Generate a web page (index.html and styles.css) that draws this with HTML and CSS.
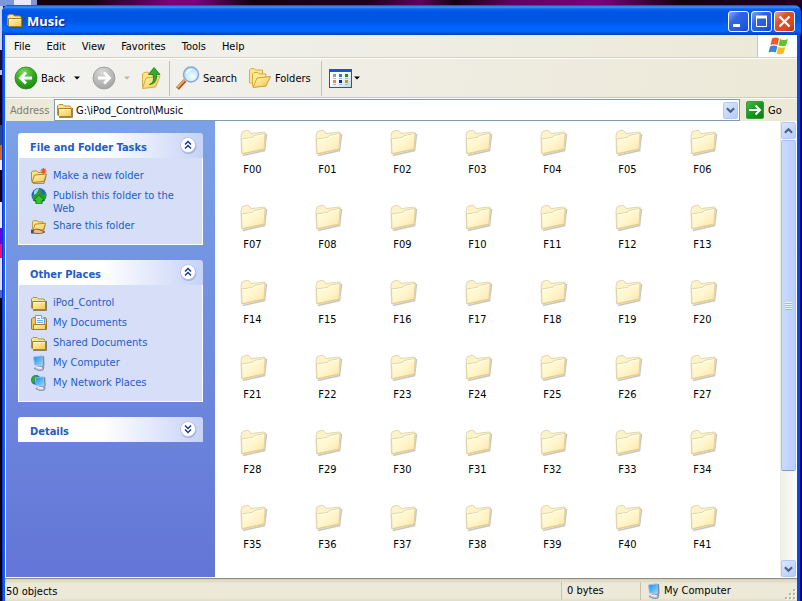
FILE: index.html
```html
<!DOCTYPE html>
<html lang="en">
<head>
<meta charset="utf-8">
<title>Music</title>
<link rel="stylesheet" href="styles.css">
</head>
<body>
<svg class="defs" aria-hidden="true">
  <defs>
    <linearGradient id="gFolder" x1="0" y1="0" x2="1" y2="1"><stop offset="0" stop-color="#fff6b8"/><stop offset="1" stop-color="#f4c64c"/></linearGradient>
    <linearGradient id="gPale" x1="0" y1="0" x2="1" y2="1"><stop offset="0" stop-color="#fffce0"/><stop offset=".5" stop-color="#fff6cc"/><stop offset="1" stop-color="#fbe3a8"/></linearGradient>
    <radialGradient id="gGreen" cx=".4" cy=".25" r=".8"><stop offset="0" stop-color="#7fd860"/><stop offset=".6" stop-color="#2fa51f"/><stop offset="1" stop-color="#1c8410"/></radialGradient>
    <radialGradient id="gGray" cx=".4" cy=".25" r=".8"><stop offset="0" stop-color="#d8d8d8"/><stop offset="1" stop-color="#a2a2a2"/></radialGradient>
    <linearGradient id="gScreen" x1="0" y1="0" x2="1" y2="1"><stop offset="0" stop-color="#1f86ee"/><stop offset="1" stop-color="#86e2ff"/></linearGradient>
    <linearGradient id="gView" x1="0" y1="0" x2="1" y2="1"><stop offset="0.4" stop-color="#fff"/><stop offset="1" stop-color="#b4d4fa"/></linearGradient>
    <linearGradient id="gGo" x1="0" y1="0" x2="1" y2="1"><stop offset="0" stop-color="#4cb84c"/><stop offset=".5" stop-color="#149a1c"/><stop offset="1" stop-color="#0a7a12"/></linearGradient>
    <radialGradient id="gLens" cx=".6" cy=".65" r=".7"><stop offset="0" stop-color="#f4fdff"/><stop offset="1" stop-color="#a5dcfa"/></radialGradient>
    <symbol id="big-folder" viewBox="0 0 32 32">
      <path d="M6 29.500l21.500-5L29.500 8" fill="none" stroke="#a8a8a8" stroke-width="1.600" opacity=".65"/>
      <path d="M4 10L5 6 7 5l4-.8L13 6l1 1.500L27.500 6l1 1-1 16-22 5L4.500 27z" fill="#fdf3c8" stroke="#ddd3b0" stroke-width=".9"/>
      <path d="M4.500 13L15 11.500 17.500 9.500 28 7.500 27 23.500 5 28z" fill="url(#gPale)" stroke="#e0cf9e" stroke-width=".9"/>
      <path d="M5.300 14L15.300 12.500 17.800 10.500 27 8.700" fill="none" stroke="#fffef2" stroke-width=".9"/>
      <path d="M5.500 27.500L26.700 23" stroke="#e8c87c" stroke-width=".8"/>
    </symbol>
    <symbol id="folder" viewBox="0 0 16 16">
      <path d="M2 15.400h13.500V6" fill="none" stroke="#5d4c28" opacity=".7"/>
      <path d="M.5 13V4L2 2.500h4L7.500 4H13l1 1.500V13z" fill="#fbe68c" stroke="#b8902c"/>
      <path d="M1.500 6.500h13v8h-12l-1-1z" fill="url(#gFolder)" stroke="#ab801c"/>
      <path d="M2.500 7.500h11" stroke="#fffbd8"/>
    </symbol>
    <symbol id="open-folder" viewBox="0 0 16 16">
      <path d="M2 15.400h11l2-7" fill="none" stroke="#5d4c28" opacity=".6"/>
      <path d="M.5 13V4L2 3h4l1 1.500h5.500V13z" fill="#fbe68c" stroke="#b8902c"/>
      <path d="M3.500 7L15.500 6 13 13.500 1 14.500z" fill="url(#gFolder)" stroke="#ab801c"/>
    </symbol>
    <symbol id="computer" viewBox="0 0 16 16">
      <path d="M3 13.500l4-2.500 6 1-1 3-4 .8z" fill="#b9bfd0" stroke="#6d7690" stroke-width=".7"/>
      <path d="M10.500 1.500L13 1l.5 9.500-2.500 2z" fill="#76829f"/>
      <path d="M2.500 2L11 .8 12 10.500 3.500 10z" fill="url(#gScreen)" stroke="#a4bce0" stroke-width=".9"/>
      <path d="M5 11.500l6 .5-1 2-5.500-1z" fill="#edf0f7"/>
    </symbol>
    <symbol id="up2" viewBox="0 0 18 18">
      <circle cx="9.500" cy="10" r="8" fill="#7c8cc0" opacity=".5"/><circle cx="9" cy="9" r="7.500" fill="#fff" stroke="#b4bfe0" stroke-width=".8"/>
      <path d="M6 8.500L9 5.500l3 3M6 12.500L9 9.500l3 3" fill="none" stroke="#123b9b" stroke-width="1.500"/>
    </symbol>
    <symbol id="down2" viewBox="0 0 18 18">
      <circle cx="9.500" cy="10" r="8" fill="#7c8cc0" opacity=".5"/><circle cx="9" cy="9" r="7.500" fill="#fff" stroke="#b4bfe0" stroke-width=".8"/>
      <path d="M6 5.500l3 3 3-3M6 9.500l3 3 3-3" fill="none" stroke="#123b9b" stroke-width="1.500"/>
    </symbol>
    <symbol id="chev-down" viewBox="0 0 10 8"><path d="M1 2l4 4 4-4" fill="none" stroke="#4d6185" stroke-width="2.400"/></symbol>
    <symbol id="chev-up" viewBox="0 0 10 8"><path d="M1 6l4-4 4 4" fill="none" stroke="#4d6185" stroke-width="2.400"/></symbol>
    <symbol id="drop" viewBox="0 0 6 4"><path d="M0 .5h6L3 3.500z" fill="currentColor"/></symbol>
  </defs>
</svg>
<div class="window">
  <header class="titlebar">
    <svg class="i16"><use href="#folder"/></svg>
    <h1>Music</h1>
    <button class="cap" aria-label="Minimize"><svg viewBox="0 0 21 21"><path d="M5 14.500h7" stroke="#fff" stroke-width="3"/></svg></button>
    <button class="cap" aria-label="Maximize"><svg viewBox="0 0 21 21"><path d="M5.500 6v9.500h10V6" fill="none" stroke="#fff"/><path d="M5 6h11" stroke="#fff" stroke-width="3"/></svg></button>
    <button class="cap close" aria-label="Close"><svg viewBox="0 0 21 21"><path d="M5.500 5.500l10 10M15.500 5.500l-10 10" stroke="#fff" stroke-width="2.200"/></svg></button>
  </header>

  <div class="menurow">
    <nav class="menus">
      <button>File</button><button>Edit</button><button>View</button><button>Favorites</button><button>Tools</button><button>Help</button>
    </nav>
    <div class="flag">
      <svg width="22" height="20" viewBox="0 0 22 20">
        <path d="M5 2.500q3.500-2 7 0l-1.500 6.500q-3.500-1.500-7 0z" fill="#ee5a24"/>
        <path d="M13 3q3.500 1.800 8 0l-2 6.500q-3.500 1.500-7.500 0z" fill="#6bbd2e"/>
        <path d="M3 10.500q3.500-1.800 7.500 0L8.800 16.500q-3.500-1.700-7.300 0z" fill="#3f83d8"/>
        <path d="M11.300 11q3.500 1.500 7 0L16.500 17.500q-3.500 1.500-7 0z" fill="#fbbc14"/>
      </svg>
    </div>
  </div>

  <div class="toolbar">
    <button class="tool back"><svg width="24" height="24" viewBox="0 0 24 24"><circle cx="12" cy="12" r="11" fill="url(#gGreen)" stroke="#278c1a" stroke-width=".8"/><path d="M18 12H7M12 6.500L6.500 12l5.500 5.500" fill="none" stroke="#fff" stroke-width="2.800"/></svg><span>Back</span><svg class="arr"><use href="#drop"/></svg></button>
    <button class="tool fwd" aria-label="Forward" disabled><svg width="24" height="24" viewBox="0 0 24 24"><circle cx="12" cy="12" r="11" fill="url(#gGray)" stroke="#999" stroke-width=".8"/><path d="M6 12h11M12 6.500l5.500 5.500-5.500 5.500" fill="none" stroke="#fff" stroke-width="2.800"/></svg><svg class="arr"><use href="#drop"/></svg></button>
    <button class="tool up" aria-label="Up"><svg width="20" height="24" viewBox="0 0 20 24"><path d="M1.500 21V8L3 6.500l4-.5 1.500 2 6-.5v12z" fill="#fbe68c" stroke="#d6ac3c"/><path d="M5 12l14-2-4.500 11L1.500 22.500z" fill="url(#gFolder)" stroke="#d6ac3c"/><path d="M8.500 18.500q5.500-1.500 3.500-10H7.500L13 1.500 19 8.500h-3.500q1 9-7 10z" fill="#35ad2c" stroke="#16790f" stroke-width=".8"/></svg></button>
    <span class="sep"></span>
    <button class="tool search"><svg width="24" height="24" viewBox="0 0 24 24"><path d="M1.500 22.500L9 14.500" stroke="#a45423" stroke-width="4"/><path d="M1.500 21.500L8.500 14" stroke="#f0a15e" stroke-width="2"/><circle cx="15" cy="8.500" r="7.500" fill="url(#gLens)" stroke="#8ba6dc" stroke-width="1.500"/><path d="M10.500 8q1-4 5-4.500" stroke="#fff" stroke-width="1.500" fill="none"/></svg><span>Search</span></button>
    <button class="tool folders"><svg width="23" height="22" viewBox="0 0 23 22"><path d="M1.500 16V3L3 1.500h3L7.500 3h7v13z" fill="#fbe68c" stroke="#d9ad3c"/><path d="M4.500 19V7L6 5.500h4L11.500 7h6.500v12z" fill="#fdeb98" stroke="#d9ad3c"/><path d="M9 11l13.500-1.500L18 19 5 20.500z" fill="url(#gFolder)" stroke="#cf9f34"/></svg><span>Folders</span></button>
    <span class="sep"></span>
    <button class="tool views" aria-label="Views"><svg width="23" height="19" viewBox="0 0 23 19"><rect x=".5" y=".5" width="22" height="18" fill="url(#gView)" stroke="#0a5ccb"/><path d="M0 1.500h23" stroke="#0a5ccb" stroke-width="3"/><path d="M4 6.500h3" stroke="#9c96cf" stroke-width="3"/><path d="M10 6.500h3" stroke="#1484e8" stroke-width="3"/><path d="M16 6.500h3" stroke="#0d9a18" stroke-width="3"/><path d="M4 12.500h3" stroke="#ff7d50" stroke-width="3"/><path d="M10 12.500h3" stroke="#0a309c" stroke-width="3"/><path d="M16 12.500h3" stroke="#cf9a00" stroke-width="3"/><path d="M4 9.500h3m3 0h3m3 0h3M4 15.500h3m3 0h3m3 0h3" stroke="#b5b5b5"/></svg><svg class="arr"><use href="#drop"/></svg></button>
  </div>

  <form class="address">
    <label for="addr">Address</label>
    <div class="combo">
      <svg class="i16"><use href="#folder"/></svg>
      <input id="addr" type="text" value="G:\iPod_Control\Music">
      <button type="button" class="sbtn" aria-label="Show addresses"><svg class="chev"><use href="#chev-down"/></svg></button>
    </div>
    <button type="button" class="go"><svg width="18" height="18" viewBox="0 0 18 18"><rect x=".5" y=".5" width="17" height="17" rx="1.500" fill="url(#gGo)" stroke="#3c9a40"/><path d="M3 9h11M9.500 4.500L14 9l-4.500 4.500" fill="none" stroke="#fff" stroke-width="2"/></svg><span>Go</span></button>
  </form>

  <main class="content">
    <aside class="side">
      <section class="panel">
        <header><h2>File and Folder Tasks</h2><button aria-label="Collapse"><svg><use href="#up2"/></svg></button></header>
        <ul>
          <li><svg class="i16" viewBox="0 0 16 16"><use href="#open-folder" width="16" height="16"/><path d="M12.500 0v6M9.500 3h6M10.500 1l4 4M14.500 1l-4 4" stroke="#f0561c" stroke-width="1.200"/></svg><a href="#">Make a new folder</a></li>
          <li><svg class="i16" viewBox="0 0 16 16"><circle cx="8" cy="7.500" r="7.500" fill="#2068c8"/><path d="M3 3q3-3 5-2.500L7 5 3 7z" fill="#9fd8f8"/><path d="M1 8l4-2 3-5 3 2-1 4 5-2q1 5-2 7H3z" fill="#2f9a34"/><path d="M8 7l5.500 5.500H11V16H5v-3.500H2.500z" fill="#33c528" stroke="#0f6f12" stroke-width=".8"/></svg><a href="#">Publish this folder to the Web</a></li>
          <li><svg class="i16" viewBox="0 0 16 16"><use href="#open-folder" width="16" height="14"/><path d="M2 12.500q3-2.500 6-1l6 2.500q-5 2.500-8 1.500L2 15z" fill="#f0ba88" stroke="#714424" stroke-width=".8"/><path d="M0 11.500v4h2.500v-3.500z" fill="#35517e"/></svg><a href="#">Share this folder</a></li>
        </ul>
      </section>
      <section class="panel">
        <header><h2>Other Places</h2><button aria-label="Collapse"><svg><use href="#up2"/></svg></button></header>
        <ul>
          <li><svg class="i16"><use href="#folder"/></svg><a href="#">iPod_Control</a></li>
          <li><svg class="i16" viewBox="0 0 16 16"><path d="M.5 14V4L2 2.500h12.500L15.500 4v10.500H1z" fill="#f0c850" stroke="#a87d18"/><path d="M4.500.5h6l3 3v8h-9z" fill="#f4faff" stroke="#6d9bd0"/><path d="M10.500.5v3h3" fill="#cfe6fb" stroke="#6d9bd0" stroke-width=".8"/><path d="M6 3.500h3M6 5.500h6M6 7.500h6" stroke="#6fb2ea"/><path d="M2.500 9.500h12v5h-12z" fill="url(#gFolder)" stroke="#a87d18"/></svg><a href="#">My Documents</a></li>
          <li><svg class="i16"><use href="#folder"/></svg><a href="#">Shared Documents</a></li>
          <li><svg class="i16"><use href="#computer"/></svg><a href="#">My Computer</a></li>
          <li><svg class="i16" viewBox="0 0 16 16"><circle cx="5" cy="5" r="5" fill="#2474d4"/><path d="M1 2q3-3 5-1L5 5 2 8q-2-2-1-6zM4 6l4 1-2 3z" fill="#2fa82e"/><use href="#computer" x="2" y="1" width="15" height="15"/></svg><a href="#">My Network Places</a></li>
        </ul>
      </section>
      <section class="panel">
        <header><h2>Details</h2><button aria-label="Expand"><svg><use href="#down2"/></svg></button></header>
      </section>
    </aside>
    <div class="files" id="files"></div>
    <div class="scroll">
      <button class="sbtn" aria-label="Scroll up"><svg class="chev"><use href="#chev-up"/></svg></button>
      <div class="track"><div class="thumb"><i></i></div></div>
      <button class="sbtn" aria-label="Scroll down"><svg class="chev"><use href="#chev-down"/></svg></button>
    </div>
  </main>

  <footer class="status">
    <span class="count">50 objects</span>
    <span class="size">0 bytes</span>
    <span class="zone"><svg class="i16"><use href="#computer"/></svg>My Computer</span>
    <svg class="grip" width="12" height="12" viewBox="0 0 12 12"><path d="M9 1.500h2M5 5.500h2m2 0h2M1 9.500h2m2 0h2m2 0h2" stroke="#fff" stroke-width="2"/><path d="M8 1h2M4 5h2m2 0h2M0 9h2m2 0h2m2 0h2" stroke="#b8b4a2" stroke-width="2"/></svg>
  </footer>
</div>
<script src="script.js"></script>
</body>
</html>
```
FILE: styles.css
```css
* { box-sizing: border-box; }
body {
  margin: 0;
  height: 100vh;
  overflow: hidden;
  padding: 5px 1px 0 2px;
  font: 11px/13px "DejaVu Sans Condensed", "Noto Sans", sans-serif;
  color: #000;
  background:
    linear-gradient(90deg, #7d98d8 0 14px, #e4ecfc 14px 31px, #7d98d8 31px 37px, #14000f 37px, #14000f 90px, #7c0080 170px, #7c0080 195px, #16000f 250px, #20001c 370px, #600060 420px, #16000f 455px, #600060 510px, #7c007c 600px, #14000f 680px, #200020) top / 100% 6px no-repeat,
    linear-gradient(#c9d4ec 0 50px, #1a1030 50px 70px, #b8c6e4 70px 75px, #150018 75px 125px, #2b4a80 125px 145px, #d07020 145px 160px, #eee 160px 170px, #150018 170px 202px, #e8e8f8 202px 228px, #6a00e0 228px 244px, #f0107c 244px 258px, #dde 258px 290px, #5a64c8 290px 298px, #08000c 298px) left / 3px 100% no-repeat,
    #0c0040;
}
button, input { font: inherit; color: inherit; }
button { border: 0; padding: 0; background: none; }
svg { display: block; flex: none; }
.defs { position: absolute; width: 0; height: 0; }
.i16 { width: 16px; height: 16px; }

.window {
  height: 100%;
  display: flex;
  flex-direction: column;
  border-radius: 7px 7px 0 0;
  background: linear-gradient(90deg, #0831d9 0 1px, #0a5ff2 1px 3px, #0650dc 3px calc(100% - 3px), #0a48e0 calc(100% - 3px) calc(100% - 1px), #00138c calc(100% - 1px));
  padding: 0 4px 0 3px;
}
.titlebar {
  flex: none;
  height: 30px;
  margin: 0 -4px 0 -3px;
  padding: 2px 6px 0 5px;
  display: flex;
  align-items: center;
  gap: 2px;
  border-radius: 7px 7px 0 0;
  background: linear-gradient(#0a49c8 0, #3d95ff 2px, #0a62ee 4px, #0054e3 7px, #0055e5 16px, #0066ff 22px, #0066ff 26px, #0050d8 28px, #003dc0 30px);
}
.titlebar .i16 { margin-bottom: 2px; }
.titlebar h1 {
  flex: 1;
  margin: 0;
  padding-left: 2px;
  font: bold 13px/18px "Noto Sans", sans-serif;
  color: #fff;
  text-shadow: 1px 1px 1px #0a1883;
}
.cap {
  width: 21px;
  height: 21px;
  border: 1px solid #fff;
  border-radius: 3px;
  background: linear-gradient(135deg, #88a8f4, #3264e0 35%, #2458e4 75%, #1a44c4);
}
.cap svg { width: 21px; height: 21px; margin: -1px; }
.close { background: linear-gradient(135deg, #f0a088, #e0502c 35%, #da4822 75%, #b43010); }

.menurow {
  flex: none;
  height: 23px;
  display: flex;
  background: linear-gradient(90deg, #f2f2f0, #ece9d8);
  border-bottom: 1px solid #d4d0bf;
}
.menus { flex: 1; display: flex; padding-left: 1px; }
.menus button { padding: 0 8px; }
.flag {
  width: 40px;
  display: grid;
  place-items: center;
  background: #fff;
  border-left: 1px solid #cdc9b6;
}
.toolbar {
  flex: none;
  height: 40px;
  display: flex;
  align-items: center;
  padding-left: 9px;
  background: linear-gradient(100deg, #f3f3f1, #eeece0 60%, #ece9d8);
  border-top: 1px solid #fff;
  border-bottom: 1px solid #cdc9b6;
}
.tool { display: flex; align-items: center; gap: 3px; height: 30px; text-align: left; }
.arr { width: 6px; height: 4px; }
.back { width: 78px; }
.back .arr { margin-left: 6px; }
.fwd { width: 49px; gap: 8px; color: #b8b5a8; }
.sep { width: 1px; height: 35px; background: #c5c2b0; }
.up { width: 28px; }
.search { width: 72px; margin-left: 6px; }
.folders { width: 73px; gap: 4px; }
.views { margin-left: 7px; gap: 2px; }

.address {
  flex: none;
  height: 23px;
  display: flex;
  align-items: center;
  background: #ece9d8;
  border-top: 1px solid #fff;
}
.address label { width: 49px; padding-left: 5px; color: #7f7c73; }
.combo {
  flex: 1;
  min-width: 0;
  height: 22px;
  display: flex;
  align-items: center;
  padding: 0 1px 0 2px;
  background: #fff;
  border: 1px solid #7f9db9;
}
.combo input { flex: 1; min-width: 0; border: 0; padding: 0 3px; background: none; outline: 0; }
.sbtn {
  flex: none;
  width: 15px;
  height: 17px;
  display: grid;
  place-items: center;
  border-radius: 2px;
  border: 1px solid #b4c8f6;
  background: linear-gradient(135deg, #dbe6ff, #b6cbfb);
}
.chev { width: 9px; height: 8px; }
.go { width: 57px; display: flex; align-items: center; gap: 4px; padding-left: 6px; }

.content { flex: 1; min-height: 0; display: flex; background: #fff; border-left: 1px solid #fff; border-bottom: 1px solid #fff; }
.side {
  flex: none;
  width: 209px;
  padding: 12px;
  display: flex;
  flex-direction: column;
  gap: 15px;
  background: linear-gradient(#7ba2e7, #6375d6);
}
.panel header {
  height: 25px;
  display: flex;
  align-items: center;
  justify-content: space-between;
  padding: 0 6px 2px 12px;
  border-radius: 3px 3px 0 0;
  background: linear-gradient(90deg, #fff 45%, #c6d3f7);
}
.panel h2 { margin: 0; padding-top: 5px; font: bold 11px/13px "DejaVu Sans Condensed", sans-serif; color: #215dc6; }
.panel header svg { width: 18px; height: 18px; }
.panel ul {
  list-style: none;
  margin: 0;
  padding: 10px 12px;
  display: flex;
  flex-direction: column;
  gap: 4px;
  border: 1px solid #fff;
  border-top: 0;
  background: #d6dff7;
}
.panel li { height: 16px; display: flex; gap: 6px; }
.panel li:has(a) { height: auto; min-height: 16px; }
.panel a { margin: 1px 0 -1px; color: #215dc6; text-decoration: none; }

.files {
  flex: 1;
  min-width: 0;
  display: grid;
  grid-template-columns: repeat(auto-fill, 75px);
  grid-auto-rows: 75px;
  align-content: start;
  overflow: hidden;
}
.file { display: flex; flex-direction: column; align-items: center; padding-top: 5px; gap: 5px; color: #000; text-decoration: none; }
.file svg { width: 32px; height: 32px; }

.scroll {
  flex: none;
  width: 17px;
  padding-top: 1px;
  display: flex;
  flex-direction: column;
  align-items: center;
  gap: 1px;
  background: linear-gradient(90deg, #eeede5, #fefefb);
}
.track { flex: 1; width: 15px; }
.thumb {
  height: 79%;
  display: grid;
  place-items: center;
  border: 1px solid #a9c0f2;
  border-bottom-color: #7c9fd3;
  border-radius: 2px;
  background: linear-gradient(90deg, #cbdafe, #bacdfc);
}
.thumb i { width: 7px; height: 8px; background: repeating-linear-gradient(#eef4fe 0 1px, #9db8f0 1px 2px); }

.status {
  flex: none;
  height: 23px;
  display: flex;
  align-items: center;
  padding: 2px 0 0 1px;
  border-top: 1px solid #8f8c7e;
  background: linear-gradient(#d6d2c0, #ece9d8 5px, #ece9d8 19px, #dedbc6);
}
.count { flex: 1; }
.size { width: 79px; }
.zone { width: 145px; display: flex; align-items: center; gap: 2px; }
.size, .zone { height: 18px; line-height: 18px; border-left: 1px solid #c5c2b0; padding-left: 5px; }
.grip { align-self: flex-end; }
```
FILE: script.js
```js
const list = document.getElementById("files");
for (let n = 0; n < 42; n++) {
  const name = "F" + String(n).padStart(2, "0");
  list.insertAdjacentHTML("beforeend",
    `<a class="file" href="#"><svg><use href="#big-folder"/></svg><span>${name}</span></a>`);
}
```
